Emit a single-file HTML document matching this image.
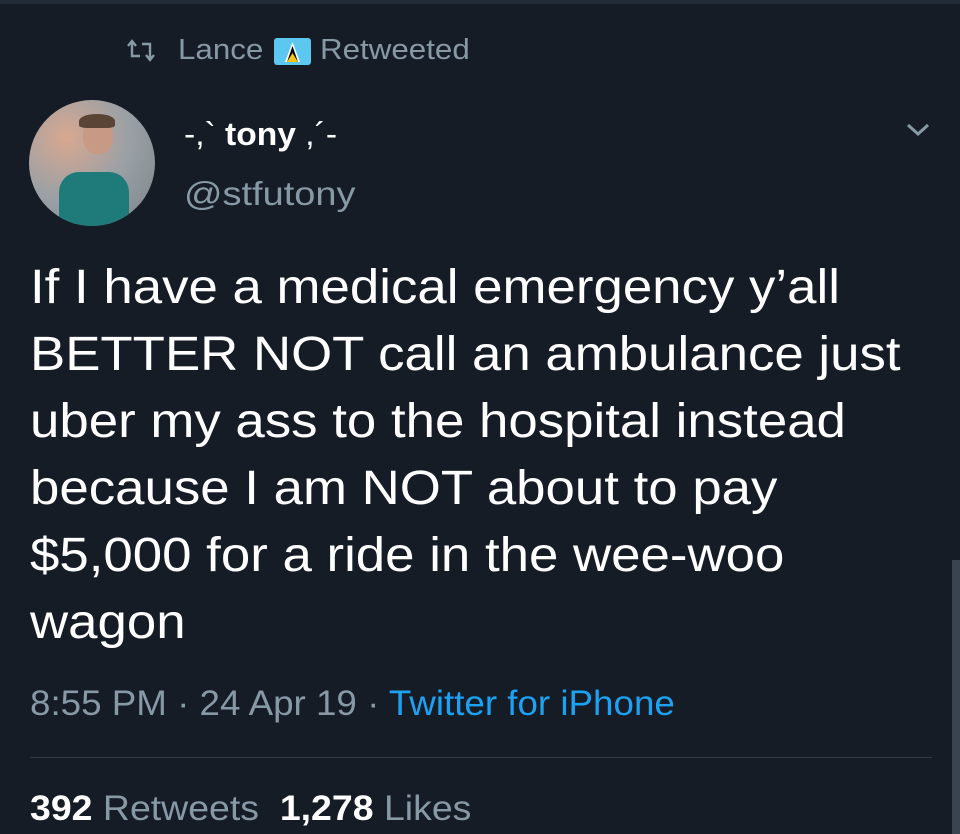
<!DOCTYPE html>
<html><head><meta charset="utf-8"><style>
body{margin:0;width:960px;height:834px;background:#151c26;overflow:hidden;font-family:"Liberation Sans",sans-serif;position:relative}
.t{position:absolute;white-space:nowrap;transform-origin:left top}
.body{left:30px;top:254px;font-size:48px;line-height:67px;color:#fff;transform:scaleX(1.1)}
.g{color:#8899a6}
</style></head><body>
<div style="position:absolute;left:0;top:0;width:960px;height:4px;background:#222c38"></div>
<div style="position:absolute;left:952px;top:560px;width:8px;height:274px;background:#3a4450"></div>
<svg style="position:absolute;left:126px;top:38px" width="30" height="26" viewBox="0 0 30 26" fill="none" stroke="#8899a6" stroke-width="2.4"><path d="M2 8 L6 3 L10 8 M6 3 V18 H14"/><path d="M16 6 H24 V21 M20 17 L24 22 L28 17"/></svg>
<div class="t g" style="left:178px;top:34px;font-size:29px;transform:scaleX(1.08)">Lance</div>
<div style="position:absolute;left:274px;top:38px;width:37px;height:27px;background:#5cc8f0;border-radius:3px;overflow:hidden"><svg width="37" height="27"><polygon points="18.5,4 11,24 26,24" fill="#fff"/><polygon points="18.5,8 13,24 24,24" fill="#000"/><polygon points="18.5,15 13,24 24,24" fill="#f5c518"/></svg></div>
<div class="t g" style="left:320px;top:34px;font-size:29px;transform:scaleX(1.08)">Retweeted</div>
<div style="position:absolute;left:29px;top:100px;width:126px;height:126px;border-radius:50%;background:radial-gradient(circle at 30% 30%,#d8a890,#9aa0a6 50%,#7b8488);overflow:hidden">
<div style="position:absolute;left:30px;top:72px;width:70px;height:60px;background:#1f7a7a;border-radius:20px 20px 0 0"></div>
<div style="position:absolute;left:54px;top:18px;width:30px;height:36px;background:#c89a86;border-radius:45%"></div>
<div style="position:absolute;left:50px;top:14px;width:36px;height:14px;background:#5a4436;border-radius:50% 50% 20% 20%"></div>
</div>
<div class="t" style="left:184px;top:116px;font-size:32px;color:#fff;transform:scaleX(1.05)">-,`<b> tony </b>,´-</div>
<div class="t g" style="left:184px;top:175px;font-size:33px;transform:scaleX(1.15)">@stfutony</div>
<svg style="position:absolute;left:905px;top:122px" width="26" height="16" fill="none" stroke="#8899a6" stroke-width="3"><path d="M3 3 L13 12 L23 3"/></svg>
<div class="t body">If I have a medical emergency y’all<br>BETTER NOT call an ambulance just<br>uber my ass to the hospital instead<br>because I am NOT about to pay<br>$5,000 for a ride in the wee-woo<br>wagon</div>
<div class="t g" style="left:30px;top:684px;font-size:35px;transform:scaleX(1.05)">8:55 PM · 24 Apr 19 · <span style="color:#1da1f2">Twitter for iPhone</span></div>
<div style="position:absolute;left:30px;top:757px;width:902px;height:1px;background:#2d3945"></div>
<div class="t g" style="left:30px;top:789px;font-size:35px;transform:scaleX(1.07)"><b style="color:#fff">392</b> Retweets &nbsp;<b style="color:#fff">1,278</b> Likes</div>
</body></html>
